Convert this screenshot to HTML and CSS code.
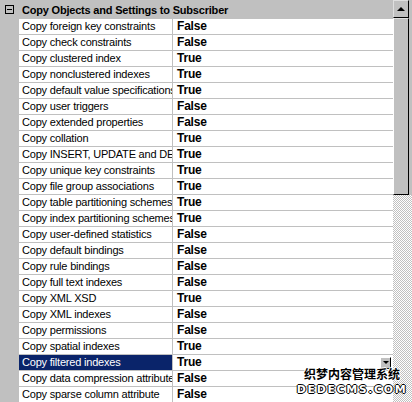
FILE: index.html
```html
<!DOCTYPE html>
<html>
<head>
<meta charset="utf-8">
<link rel="stylesheet" href="styles.css">
</head>
<body>
<div class="grid">
  <div class="list">
    <div class="cat">
      <span class="toggle"><span class="minus"></span></span>
      <span class="cat-title">Copy Objects and Settings to Subscriber</span>
    </div>
    <div class="row"><div class="gutter"></div><div class="name">Copy foreign key constraints</div><div class="val">False</div></div>
    <div class="row"><div class="gutter"></div><div class="name">Copy check constraints</div><div class="val">False</div></div>
    <div class="row"><div class="gutter"></div><div class="name">Copy clustered index</div><div class="val">True</div></div>
    <div class="row"><div class="gutter"></div><div class="name">Copy nonclustered indexes</div><div class="val">True</div></div>
    <div class="row"><div class="gutter"></div><div class="name">Copy default value specifications</div><div class="val">True</div></div>
    <div class="row"><div class="gutter"></div><div class="name">Copy user triggers</div><div class="val">False</div></div>
    <div class="row"><div class="gutter"></div><div class="name">Copy extended properties</div><div class="val">False</div></div>
    <div class="row"><div class="gutter"></div><div class="name">Copy collation</div><div class="val">True</div></div>
    <div class="row"><div class="gutter"></div><div class="name">Copy INSERT, UPDATE and DELETE statements</div><div class="val">True</div></div>
    <div class="row"><div class="gutter"></div><div class="name">Copy unique key constraints</div><div class="val">True</div></div>
    <div class="row"><div class="gutter"></div><div class="name">Copy file group associations</div><div class="val">True</div></div>
    <div class="row"><div class="gutter"></div><div class="name">Copy table partitioning schemes</div><div class="val">True</div></div>
    <div class="row"><div class="gutter"></div><div class="name">Copy index partitioning schemes</div><div class="val">True</div></div>
    <div class="row"><div class="gutter"></div><div class="name">Copy user-defined statistics</div><div class="val">False</div></div>
    <div class="row"><div class="gutter"></div><div class="name">Copy default bindings</div><div class="val">False</div></div>
    <div class="row"><div class="gutter"></div><div class="name">Copy rule bindings</div><div class="val">False</div></div>
    <div class="row"><div class="gutter"></div><div class="name">Copy full text indexes</div><div class="val">False</div></div>
    <div class="row"><div class="gutter"></div><div class="name">Copy XML XSD</div><div class="val">True</div></div>
    <div class="row"><div class="gutter"></div><div class="name">Copy XML indexes</div><div class="val">False</div></div>
    <div class="row"><div class="gutter"></div><div class="name">Copy permissions</div><div class="val">False</div></div>
    <div class="row"><div class="gutter"></div><div class="name">Copy spatial indexes</div><div class="val">True</div></div>
    <div class="row selected"><div class="gutter"></div><div class="name">Copy filtered indexes</div><div class="val">True<span class="drop"><span class="tri"></span></span></div></div>
    <div class="row"><div class="gutter"></div><div class="name">Copy data compression attribute</div><div class="val">False</div></div>
    <div class="row"><div class="gutter"></div><div class="name">Copy sparse column attribute</div><div class="val">False</div></div>
  </div>
  <div class="scrollbar">
    <div class="up"><span class="uptri"></span></div>
    <div class="thumb"></div>
    <div class="track"></div>
  </div>
  <div class="watermark">
    <div class="wm-cn">织梦内容管理系统</div>
    <div class="wm-en">DEDECMS.COM</div>
  </div>
</div>
</body>
</html>
```
FILE: styles.css
```css
html, body {
  margin: 0;
  padding: 0;
  background: #c0c0c0;
}
body {
  width: 412px;
  height: 402px;
  overflow: hidden;
  font-family: "Liberation Sans", Arial, sans-serif;
  color: #000;
}
.grid {
  position: relative;
  display: flex;
  width: 412px;
  height: 402px;
  overflow: hidden;
}
.list {
  width: 393px;
  flex: none;
  display: flex;
  flex-direction: column;
}
.cat {
  height: 19px;
  flex: none;
  display: flex;
  align-items: center;
  background: #c0c0c0;
}
.toggle {
  width: 19px;
  height: 19px;
  flex: none;
  display: flex;
  align-items: center;
  justify-content: center;
}
.minus {
  position: relative;
  width: 7px;
  height: 7px;
  border: 1px solid #000;
  background: #c0c0c0;
}
.minus::after {
  content: "";
  position: absolute;
  left: 1px;
  top: 3px;
  width: 5px;
  height: 1px;
  background: #000;
}
.cat-title {
  padding-left: 3px;
  font-weight: bold;
  font-size: 11px;
  letter-spacing: -0.2px;
  white-space: nowrap;
}
.row {
  height: 16px;
  flex: none;
  display: flex;
}
.gutter {
  width: 19px;
  flex: none;
  background: #c0c0c0;
}
.name {
  width: 150px;
  flex: none;
  padding-left: 3px;
  background: #fff;
  border-bottom: 1px solid #c0c0c0;
  border-right: 1px solid #c0c0c0;
  font-size: 11px;
  letter-spacing: -0.2px;
  line-height: 15px;
  white-space: nowrap;
  overflow: hidden;
}
.val {
  flex: 1;
  display: flex;
  align-items: center;
  padding-left: 4px;
  background: #fff;
  border-bottom: 1px solid #c0c0c0;
  font-size: 12px;
  font-weight: bold;
  letter-spacing: -0.2px;
  line-height: 15px;
}
.selected .name {
  background: #0a246a;
  color: #fff;
}
.drop {
  margin-left: auto;
  margin-right: 2px;
  width: 11px;
  height: 12px;
  box-sizing: border-box;
  background: #c0c0c0;
  border: 1px solid;
  border-color: #fff #000 #000 #fff;
  display: flex;
  align-items: center;
  justify-content: center;
}
.tri {
  width: 0;
  height: 0;
  border-left: 3px solid transparent;
  border-right: 3px solid transparent;
  border-top: 3px solid #000;
}
.scrollbar {
  width: 19px;
  flex: none;
  display: flex;
  flex-direction: column;
}
.up {
  height: 18px;
  width: 16px;
  box-sizing: border-box;
  background: #c0c0c0;
  border: 1px solid;
  border-color: #dfdfdf #000 #000 #dfdfdf;
  display: flex;
  align-items: center;
  justify-content: center;
}
.uptri {
  width: 0;
  height: 0;
  border-left: 4px solid transparent;
  border-right: 4px solid transparent;
  border-bottom: 4px solid #000;
}
.thumb {
  height: 177px;
  width: 16px;
  box-sizing: border-box;
  background: #c0c0c0;
  border: 1px solid;
  border-color: #dfdfdf #000 #000 #fff;
  flex: none;
}
.track {
  flex: 1;
  background: repeating-conic-gradient(#ffffff 0 25%, #c0c0c0 0 50%) 0 0 / 2px 2px;
}
.watermark {
  position: absolute;
  left: 302px;
  top: 365px;
  width: 100px;
  display: flex;
  flex-direction: column;
  align-items: center;
}
.wm-cn {
  font-family: "Noto Sans CJK SC", sans-serif;
  font-weight: bold;
  font-size: 12px;
  line-height: 17px;
  color: #000;
  text-shadow: 1px 0 #fff, -1px 0 #fff, 0 1px #fff, 0 -1px #fff;
}
.wm-en {
  margin-top: 1px;
  font-family: "DejaVu Sans", sans-serif;
  font-weight: bold;
  font-size: 11px;
  line-height: 14px;
  letter-spacing: 1.6px;
  color: #fff;
  text-shadow: 1px 0 #000, -1px 0 #000, 0 1px #000, 0 -1px #000;
}
```
